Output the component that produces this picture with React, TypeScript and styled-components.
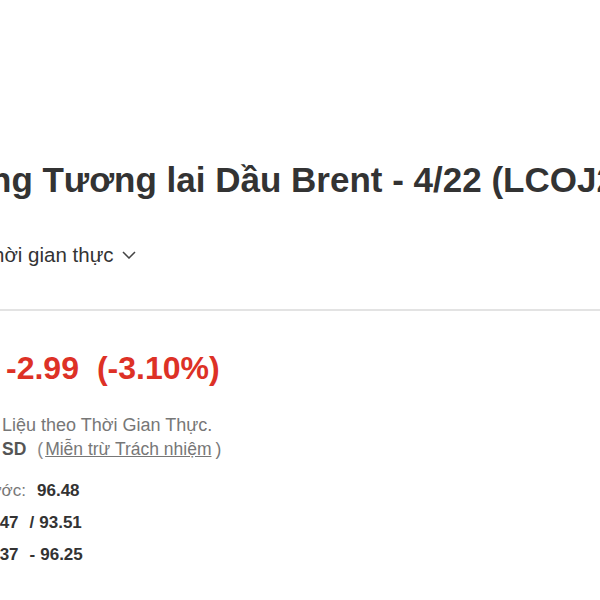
import React from "react";
import styled, { createGlobalStyle } from "styled-components";

const Global = createGlobalStyle`
  html, body { margin: 0; padding: 0; background: #ffffff; overflow: hidden; }
  body { font-family: "Liberation Sans", Arial, sans-serif; color: #333; }
`;

const OFFSET = 400;

const Page = styled.div`
  margin-left: -${OFFSET}px;
  width: ${OFFSET + 800}px;
  padding-top: 159px;
  display: flex;
  flex-direction: column;
`;

const Line = styled.div<{ $size: number; $lh: number; $weight?: number; $color?: string; $mt?: number }>`
  display: flex;
  align-items: baseline;
  white-space: nowrap;
  font-size: ${(p) => p.$size}px;
  line-height: ${(p) => p.$lh}px;
  font-weight: ${(p) => p.$weight ?? 400};
  color: ${(p) => p.$color ?? "#333"};
  margin-top: ${(p) => p.$mt ?? 0}px;
`;

/* the part of a line that lies left of the visible area; $end is where the box stops,
   $pad keeps its text clear of what follows */
const Lead = styled.span<{ $end: number; $pad?: number }>`
  flex: none;
  box-sizing: border-box;
  width: ${(p) => OFFSET + p.$end}px;
  padding-right: ${(p) => p.$pad ?? 0}px;
  text-align: right;
`;

const Chevron = styled.svg`
  margin-left: 8px;
  align-self: center;
  flex: none;
`;

const Divider = styled.div`
  margin-top: 42px;
  height: 0;
  border-top: 2px solid #e3e3e3;
`;

const Change = styled.span`
  color: #dd3126;
  font-weight: 700;
`;

const ChangePct = styled(Change)`
  margin-left: 18px;
`;

const Info = styled.div`
  margin-top: 27px;
  display: flex;
  flex-direction: column;
`;

const Strong = styled.span`
  font-weight: 700;
  color: #555;
`;

const Paren = styled.span`
  color: #888;
  margin-left: 11px;
`;

const Link = styled.span`
  color: #777;
  text-decoration: underline;
  margin: 0 4px 0 2px;
`;

const Stats = styled.div`
  margin-top: 14px;
  display: flex;
  flex-direction: column;
`;

const Label = styled(Lead)`
  color: #777;
`;

const Value = styled.span`
  margin-left: 11px;
  font-weight: 700;
  color: #333;
  display: flex;
  align-items: baseline;
`;

const Sep = styled.span`
  margin: 0 5px 0 11px;
`;

const BigPrice = styled.span`
  font-size: 40px;
  color: #333;
`;

export default function App() {
  return (
    <>
      <Global />
      <Page>
        <Line $size={35} $lh={42} $weight={700} $color="#333">
          <Lead $end={-10}>Hợp đồ</Lead>
          <span>ng Tương lai Dầu Brent - 4/22 (LCOJ22)</span>
        </Line>
        <Line $size={20.5} $lh={24} $mt={42} $color="#333">
          <Lead $end={-7}>Dữ liệu t</Lead>
          <span>hời gian thực</span>
          <Chevron width="14" height="8" viewBox="0 0 14 8">
            <polyline points="1,1 7,7 13,1" fill="none" stroke="#444" strokeWidth="1.5" />
          </Chevron>
        </Line>
        <Divider />
        <Line $size={32} $lh={36} $weight={700} $mt={36}>
          <Lead $end={6} $pad={12}>
            <BigPrice>93.49</BigPrice>
          </Lead>
          <Change>-2.99</Change>
          <ChangePct>(-3.10%)</ChangePct>
        </Line>
        <Info>
          <Line $size={18} $lh={24} $color="#777">
            <Lead $end={2} $pad={6}>Dữ</Lead>
            <span>Liệu theo Thời Gian Thực.</span>
          </Line>
          <Line $size={17.5} $lh={24} $color="#777">
            <Lead $end={2} $pad={6}>Tiền tệ bằng</Lead>
            <Strong>SD</Strong>
            <Paren>(</Paren>
            <Link>Miễn trừ Trách nhiệm</Link>
            <span>)</span>
          </Line>
        </Info>
        <Stats>
          <Line $size={17} $lh={32}>
            <Label $end={26}>Đóng cửa trước:</Label>
            <Value>96.48</Value>
          </Line>
          <Line $size={17} $lh={32}>
            <Label $end={-35}>Giá mua/bán:</Label>
            <Value>
              93.47<Sep>/</Sep>93.51
            </Value>
          </Line>
          <Line $size={17} $lh={32}>
            <Label $end={-35}>Biên độ ngày:</Label>
            <Value>
              93.37<Sep>-</Sep>96.25
            </Value>
          </Line>
        </Stats>
      </Page>
    </>
  );
}
